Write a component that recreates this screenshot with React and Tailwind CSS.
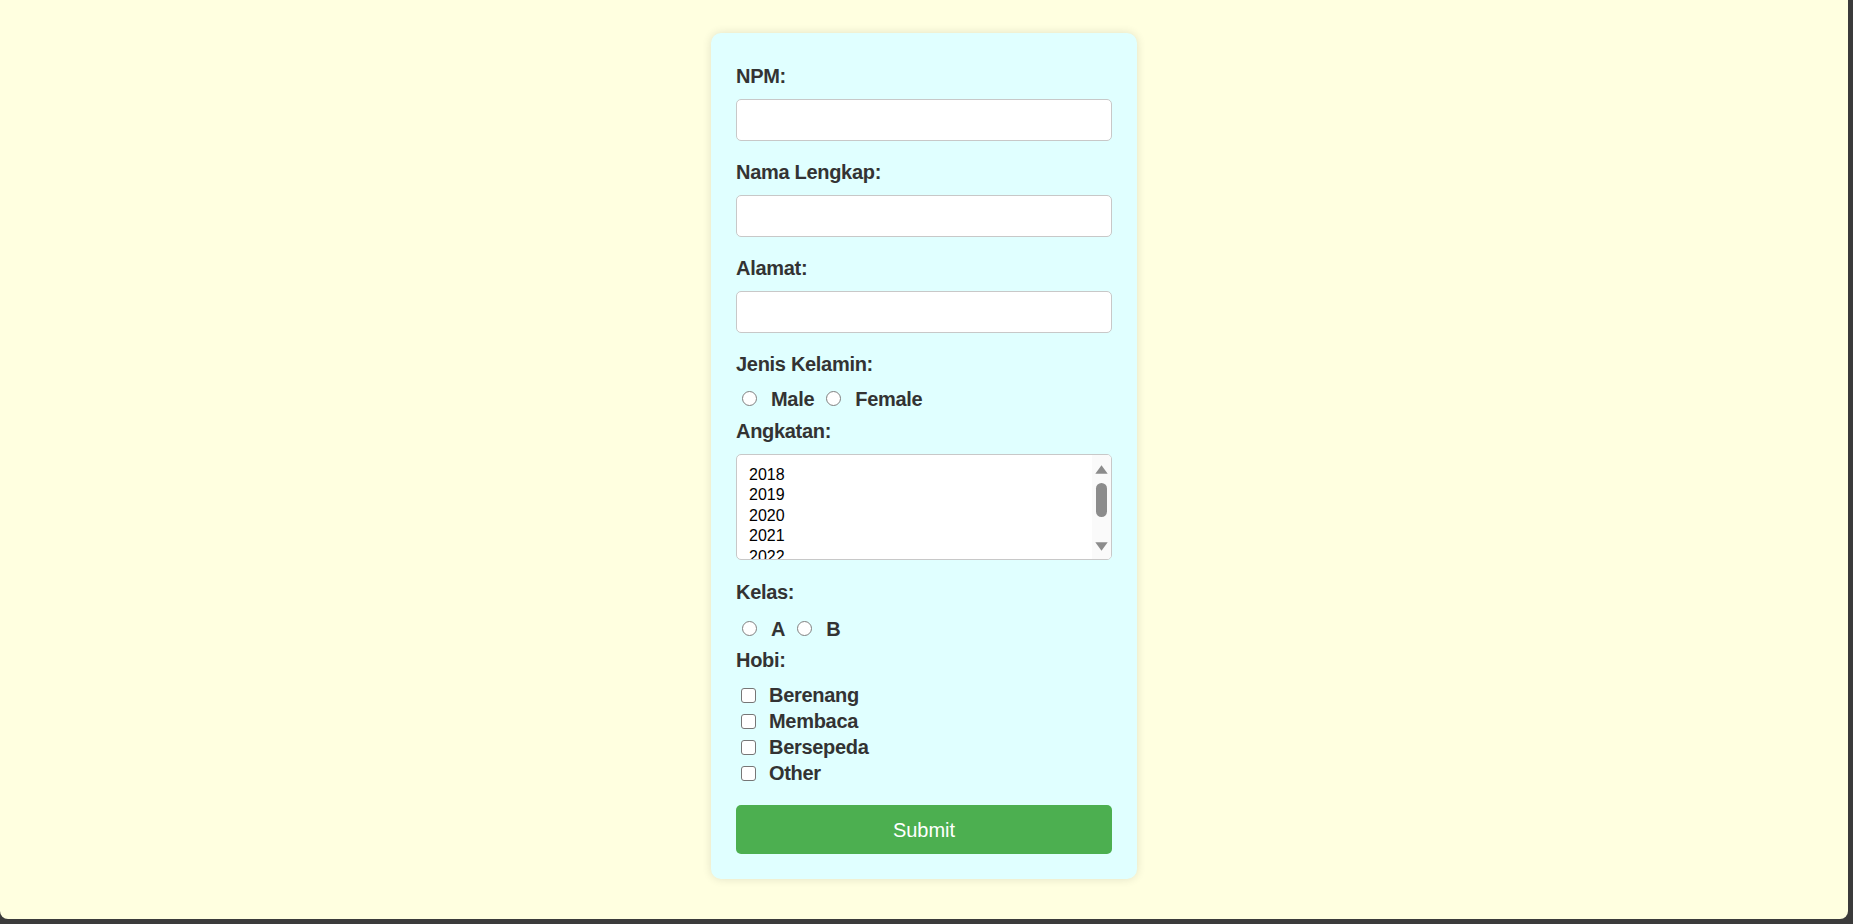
import React from "react";

const years = ["2018", "2019", "2020", "2021", "2022", "2023", "2024"];
const hobbies = ["Berenang", "Membaca", "Bersepeda", "Other"];

const Label = ({ children, className = "" }) => (
  <label className={`block h-[23px] leading-[23px] text-[20px] font-bold tracking-[-0.3px] text-[#333] ${className}`}>
    {children}
  </label>
);

const TextInput = () => (
  <input
    type="text"
    className="block w-full h-[42px] mt-[11px] mb-[20px] rounded-[5px] border border-[#c8c8c8] bg-white px-[10px] outline-none"
  />
);

const Radio = ({ name, label, first }) => (
  <span className={`flex items-center ${first ? "" : "ml-[6px]"}`}>
    <input
      type="radio"
      name={name}
      className="appearance-none ml-[6px] mr-[14px] w-[15px] h-[15px] rounded-full border border-[#808080] bg-white"
    />
    <span>{label}</span>
  </span>
);

const App = () => {
  return (
    <div className="w-full h-screen bg-[#3b3b3b]">
      <div
        className="w-[1848px] h-[919px] rounded-b-[8px] bg-[#ffffe0] pt-[33px]"
        style={{ fontFamily: '"Liberation Sans", Arial, sans-serif' }}
      >
        <form className="mx-auto w-[426px] rounded-[10px] bg-[#e0ffff] px-[25px] pt-[32px] pb-[25px] shadow-[0_0_10px_rgba(0,0,0,0.12)]">
          <Label>NPM:</Label>
          <TextInput />
          <Label>Nama Lengkap:</Label>
          <TextInput />
          <Label>Alamat:</Label>
          <TextInput />

          <Label>Jenis Kelamin:</Label>
          <div className="flex h-[23px] mt-[11px] items-center text-[20px] font-bold tracking-[-0.3px] text-[#333]">
            <Radio name="jk" label="Male" first />
            <Radio name="jk" label="Female" />
          </div>

          <Label className="mt-[10px]">Angkatan:</Label>
          <div className="flex h-[106px] mt-[11px] rounded-[5px] border border-[#c8c8c8] bg-white overflow-hidden">
            <div className="flex-1 pt-[10px] pl-[12px] overflow-hidden">
              {years.map((y) => (
                <div key={y} className="h-[20.4px] leading-[20.4px] text-[16px] text-black">
                  {y}
                </div>
              ))}
            </div>
            <div className="w-[19px] bg-[#fafafa] flex flex-col items-center pt-[10px]">
              <svg width="13" height="9" viewBox="0 0 13 9">
                <path d="M6.5 0.3 L12.7 8.7 L0.3 8.7 Z" fill="#8c8c8c" />
              </svg>
              <div className="w-[11px] h-[34px] mt-[9px] rounded-full bg-[#8c8c8c]" />
              <svg className="mt-[25px]" width="13" height="9" viewBox="0 0 13 9">
                <path d="M0.3 0.3 L12.7 0.3 L6.5 8.7 Z" fill="#8c8c8c" />
              </svg>
            </div>
          </div>

          <Label className="mt-[21px]">Kelas:</Label>
          <div className="flex h-[23px] mt-[13px] items-center text-[20px] font-bold tracking-[-0.3px] text-[#333]">
            <Radio name="kelas" label="A" first />
            <Radio name="kelas" label="B" />
          </div>

          <Label className="mt-[9px]">Hobi:</Label>
          <div className="mt-[10px] text-[20px] font-bold tracking-[-0.3px] text-[#333]">
            {hobbies.map((h) => (
              <div key={h} className="flex h-[26px] items-center">
                <input
                  type="checkbox"
                  className="appearance-none ml-[5px] mr-[13px] w-[15px] h-[15px] rounded-[3px] border-[1.5px] border-[#767676] bg-white"
                />
                <span className="leading-[26px]">{h}</span>
              </div>
            ))}
          </div>

          <button
            type="button"
            className="block w-full h-[49px] mt-[19px] rounded-[5px] bg-[#4caf50] text-white text-[20px]"
          >
            Submit
          </button>
        </form>
      </div>
    </div>
  );
};

export default App;
